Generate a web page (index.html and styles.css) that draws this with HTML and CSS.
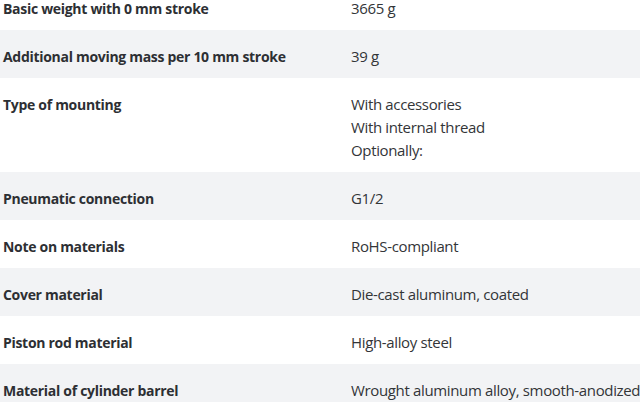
FILE: index.html
```html
<!DOCTYPE html>
<html lang="en">
<head>
<meta charset="utf-8">
<title>Technical data</title>
<link rel="stylesheet" href="styles.css">
</head>
<body>
<div class="specs">
  <div class="row">
    <div class="label">Basic weight with 0 mm stroke</div>
    <div class="value">3665 g</div>
  </div>
  <div class="row alt">
    <div class="label">Additional moving mass per 10 mm stroke</div>
    <div class="value">39 g</div>
  </div>
  <div class="row">
    <div class="label">Type of mounting</div>
    <div class="value">With accessories<br>With internal thread<br>Optionally:</div>
  </div>
  <div class="row alt">
    <div class="label">Pneumatic connection</div>
    <div class="value">G1/2</div>
  </div>
  <div class="row">
    <div class="label">Note on materials</div>
    <div class="value">RoHS-compliant</div>
  </div>
  <div class="row alt">
    <div class="label">Cover material</div>
    <div class="value">Die-cast aluminum, coated</div>
  </div>
  <div class="row">
    <div class="label">Piston rod material</div>
    <div class="value">High-alloy steel</div>
  </div>
  <div class="row alt">
    <div class="label">Material of cylinder barrel</div>
    <div class="value">Wrought aluminum alloy, smooth-anodized</div>
  </div>
</div>
</body>
</html>
```

FILE: styles.css
```css
html, body {
  margin: 0;
  padding: 0;
  background: #ffffff;
  overflow: hidden;
}

body {
  font-family: "Open Sans", "Noto Sans", sans-serif;
  font-size: 15px;
  color: #333538;
}

.specs {
  margin-top: -18px;
  width: 640px;
}

.row {
  display: grid;
  grid-template-columns: 348px 1fr;
  align-items: start;
  padding: 15px 0 10px;
  line-height: 23px;
  background: #ffffff;
}

.row.alt {
  background: #f2f3f5;
}

.label {
  padding-left: 3px;
  font-size: 14px;
  font-weight: 700;
  letter-spacing: -0.3px;
  color: #2d2f33;
}

.value {
  padding-left: 3px;
  white-space: nowrap;
  letter-spacing: -0.35px;
}
```
